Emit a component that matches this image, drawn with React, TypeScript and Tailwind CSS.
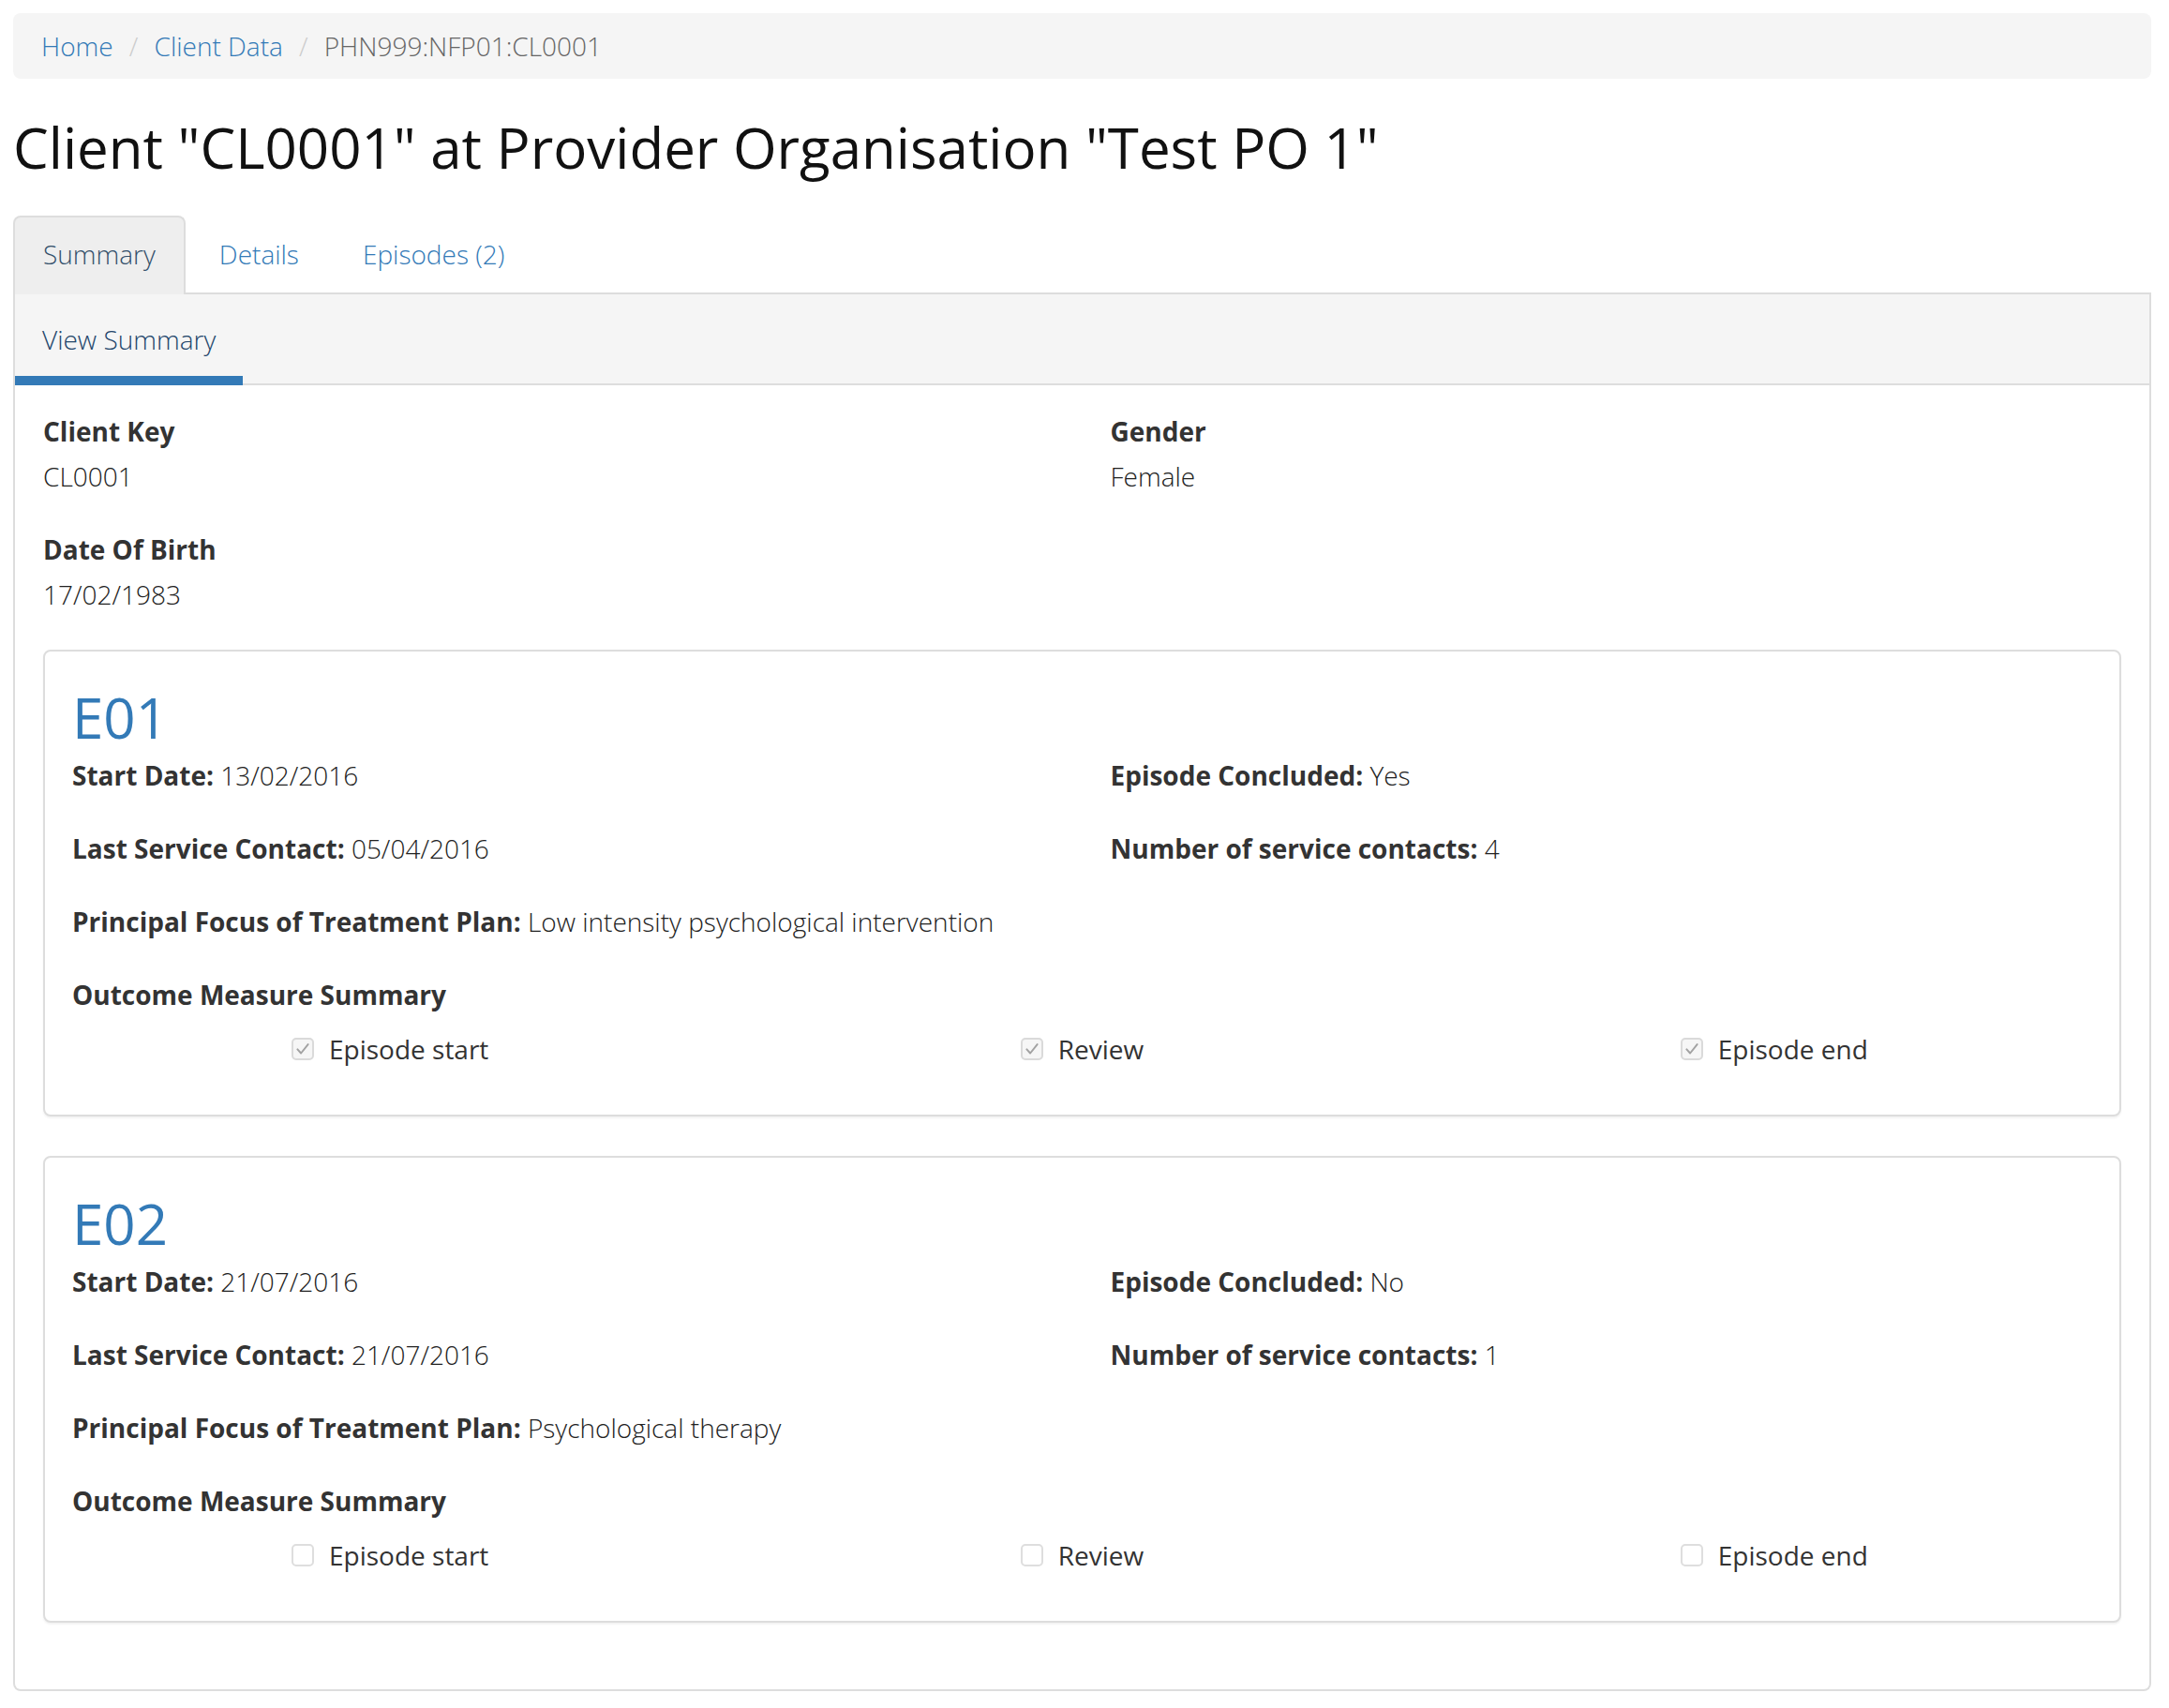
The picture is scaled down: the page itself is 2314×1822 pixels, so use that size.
import React from "react";

function Box({ checked }: { checked: boolean }) {
  return (
    <span
      className={
        "inline-flex h-[24px] w-[24px] shrink-0 items-center justify-center rounded-[5px] border-2 " +
        (checked ? "border-[#dadada] bg-[#f6f6f6]" : "border-[#dedede] bg-white")
      }
    >
      {checked && (
        <svg width="18" height="18" viewBox="0 0 24 24" fill="none">
          <path d="M4.5 12.5 L9.5 18 L19.5 5.5" stroke="#a2a2a2" strokeWidth="2.6" strokeLinecap="round" strokeLinejoin="round" />
        </svg>
      )}
    </span>
  );
}

function Field({ label, value, span }: { label: string; value: string; span?: boolean }) {
  return (
    <div className={span ? "col-span-2" : ""}>
      <span className="font-bold">{label}</span> <span className="font-light text-[#222222]">{value}</span>
    </div>
  );
}

type Ep = {
  id: string;
  start: string;
  concluded: string;
  last: string;
  contacts: string;
  focus: string;
  checked: boolean;
};

function EpisodeCard({ ep }: { ep: Ep }) {
  return (
    <div className="mb-[42px] rounded-[8px] border-2 border-[#dddddd] bg-white px-[29px] pb-[50px] pt-[37px] shadow-[0_2px_2px_rgba(0,0,0,0.05)]">
      <h2 className="mb-[9px] text-[60px] font-normal leading-[66px] text-[#337ab7]">{ep.id}</h2>
      <div className="grid grid-cols-2 gap-x-[60px] gap-y-[38px] text-[28px] leading-[40px]">
        <Field label="Start Date:" value={ep.start} />
        <Field label="Episode Concluded:" value={ep.concluded} />
        <Field label="Last Service Contact:" value={ep.last} />
        <Field label="Number of service contacts:" value={ep.contacts} />
        <Field label="Principal Focus of Treatment Plan:" value={ep.focus} span />
        <div className="col-span-2 font-bold">Outcome Measure Summary</div>
      </div>
      <div className="mt-[18px] grid grid-cols-3 gap-x-[60px] text-[28px] leading-[40px]">
        {["Episode start", "Review", "Episode end"].map((t) => (
          <div key={t} className="flex items-center justify-center">
            <Box checked={ep.checked} />
            <span className="ml-[16px] font-normal">{t}</span>
          </div>
        ))}
      </div>
    </div>
  );
}

export default function App() {
  const eps: Ep[] = [
    {
      id: "E01",
      start: "13/02/2016",
      concluded: "Yes",
      last: "05/04/2016",
      contacts: "4",
      focus: "Low intensity psychological intervention",
      checked: true,
    },
    {
      id: "E02",
      start: "21/07/2016",
      concluded: "No",
      last: "21/07/2016",
      contacts: "1",
      focus: "Psychological therapy",
      checked: false,
    },
  ];

  return (
    <div className="min-h-screen bg-white pl-[14px] pr-[19px] pt-[14px] font-['Open_Sans',sans-serif] text-[#333333]">
      {/* Breadcrumb */}
      <div className="flex rounded-[8px] bg-[#f5f5f5] px-[30px] py-[15px] text-[28px] font-light leading-[40px]">
        <span className="text-[#337ab7]">Home</span>
        <span className="ml-[7px] px-[10px] text-[#cccccc]">/&nbsp;</span>
        <span className="text-[#337ab7]">Client Data</span>
        <span className="ml-[7px] px-[10px] text-[#cccccc]">/&nbsp;</span>
        <span className="text-[#666666]">PHN999:NFP01:CL0001</span>
      </div>

      {/* Title */}
      <h1 className="my-[40px] text-[60px] font-normal leading-[66px] text-[#111111]">
        Client "CL0001" at Provider Organisation "Test PO 1"
      </h1>

      {/* Tabs */}
      <div className="flex border-b-2 border-[#dddddd] text-[28px] font-light leading-[40px]">
        <div className="-mb-[2px] mr-[4px] rounded-t-[8px] border-2 border-b-0 border-[#dddddd] bg-[#eeeeee] px-[30px] pb-[21px] pt-[19px] text-[#34506b]">
          Summary
        </div>
        <div className="mr-[4px] border-2 border-transparent px-[30px] pb-[19px] pt-[19px] text-[#337ab7]">Details</div>
        <div className="mr-[4px] border-2 border-transparent px-[30px] pb-[19px] pt-[19px] text-[#337ab7]">Episodes (2)</div>
      </div>

      {/* Panel */}
      <div className="rounded-b-[8px] border-x-2 border-b-2 border-[#dddddd]">
        <div className="flex border-b-2 border-[#dddddd] bg-[#f5f5f5] text-[28px] font-light leading-[40px]">
          <div className="-mb-[2px] border-b-[10px] border-[#337ab7] px-[29px] pb-[19px] pt-[28px] text-[#23466b]">
            View Summary
          </div>
        </div>

        <div className="px-[30px] pb-[29px] pt-[29px] text-[28px] leading-[40px]">
          <div className="grid grid-cols-2 gap-x-[60px]">
            <div>
              <div className="mb-[8px] font-bold">Client Key</div>
              <div className="font-light text-[#222222]">CL0001</div>
            </div>
            <div>
              <div className="mb-[8px] font-bold">Gender</div>
              <div className="font-light text-[#222222]">Female</div>
            </div>
          </div>
          <div className="mt-[38px]">
            <div className="mb-[8px] font-bold">Date Of Birth</div>
            <div className="font-light text-[#222222]">17/02/1983</div>
          </div>

          <div className="mt-[39px]">
            {eps.map((e) => (
              <EpisodeCard key={e.id} ep={e} />
            ))}
          </div>
        </div>
      </div>
    </div>
  );
}
